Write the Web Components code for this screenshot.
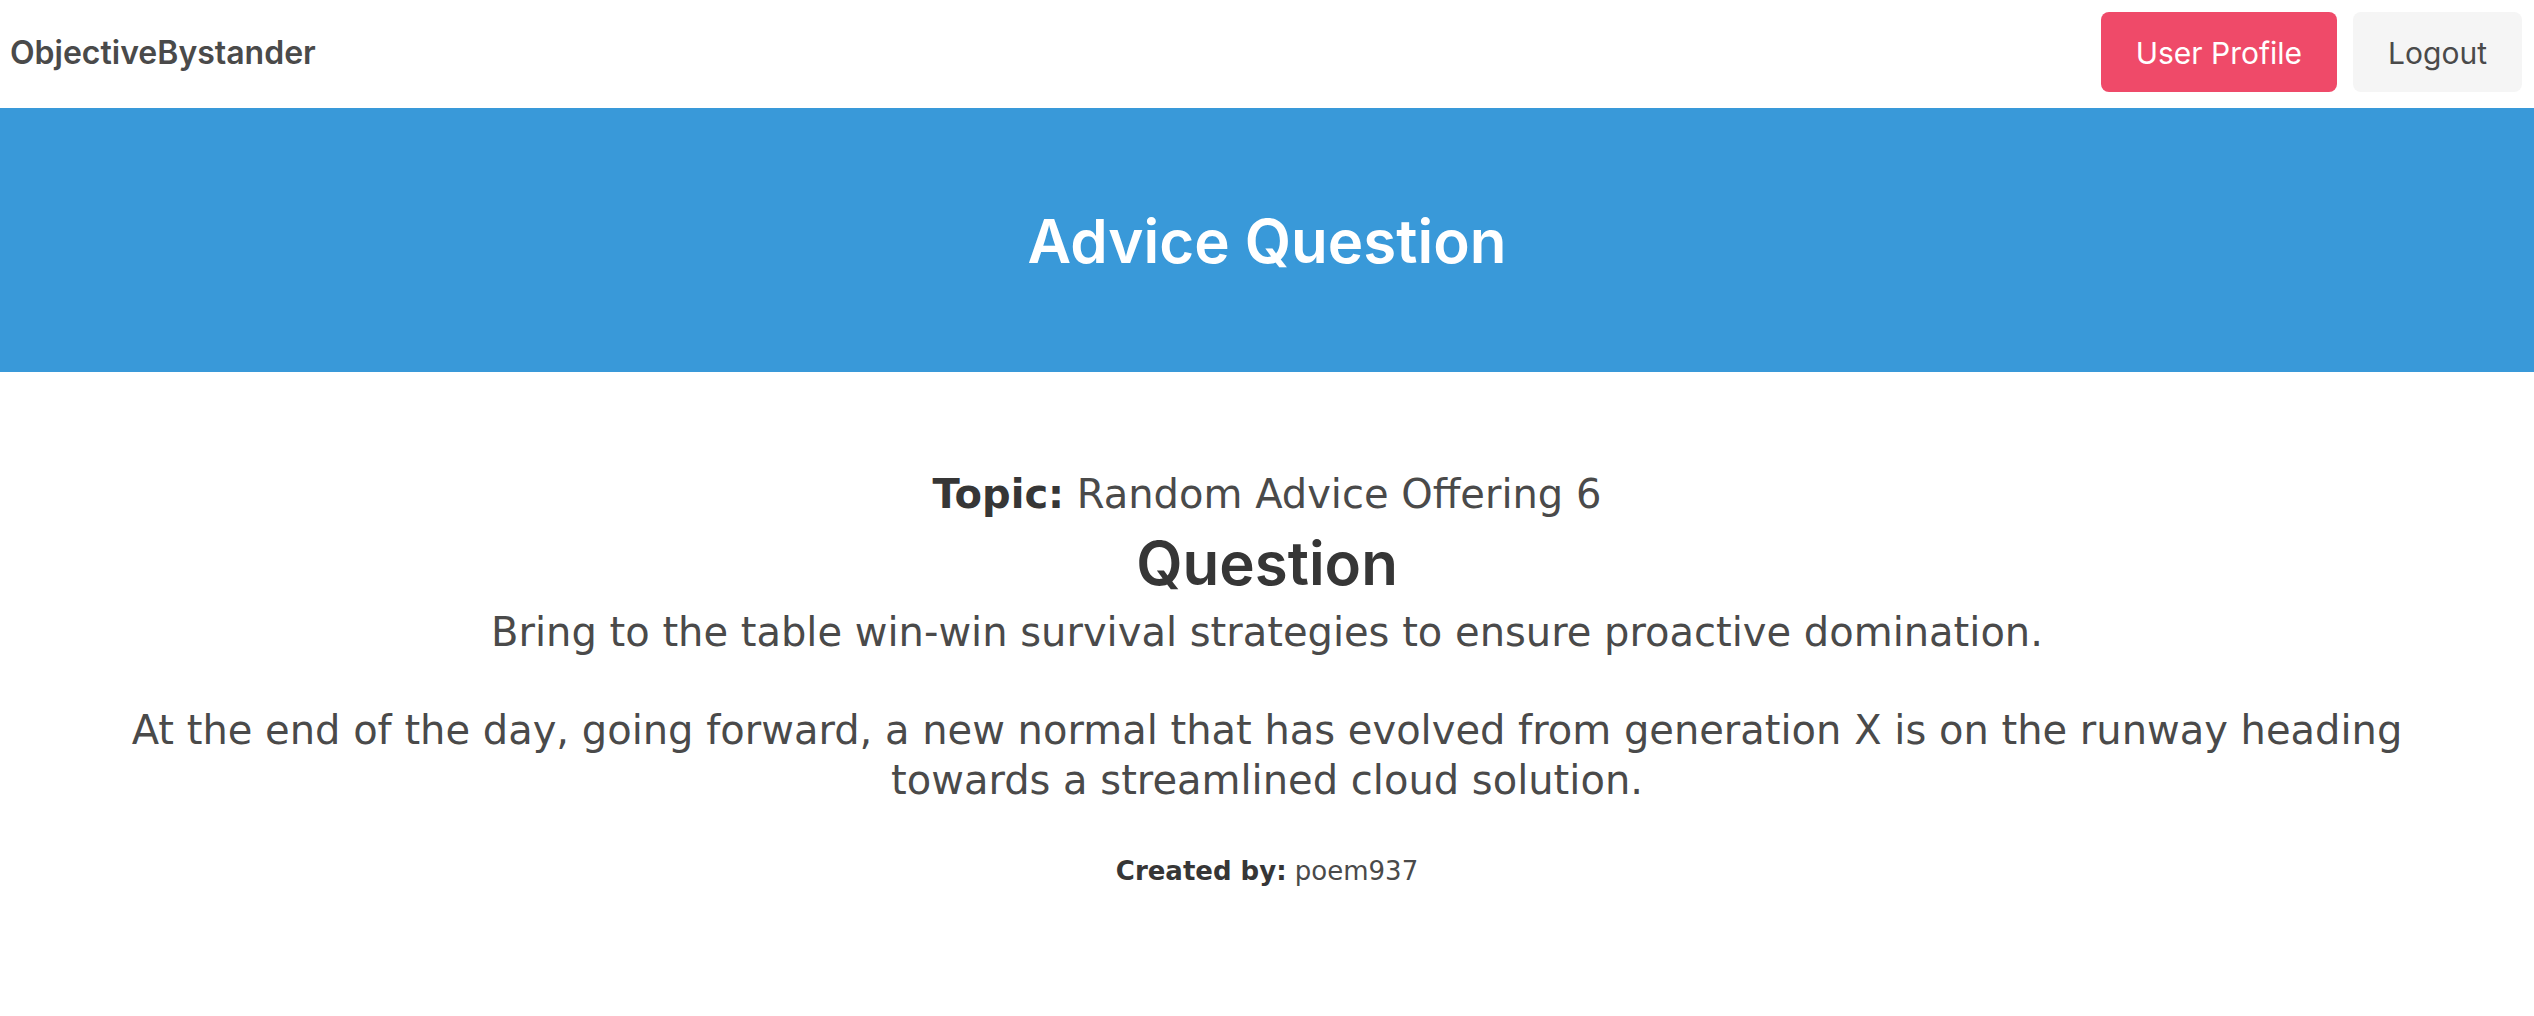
<!DOCTYPE html>
<html lang="en">
<head>
<meta charset="utf-8">
<title>ObjectiveBystander</title>
<style>
body { margin: 0; background: #fff; color: #4a4a4a; font-family: Inter, "Liberation Sans", sans-serif; font-size: 32px; line-height: 48px; }
</style>
</head>
<body>
<site-navbar>
  <a slot="brand" href="#">ObjectiveBystander</a>
  <nav-button variant="danger">User Profile</nav-button>
  <nav-button>Logout</nav-button>
</site-navbar>
<main>
  <page-hero>Advice Question</page-hero>
  <advice-question topic="Random Advice Offering 6" author="poem937">
    <p>Bring to the table win-win survival strategies to ensure proactive domination.</p>
    <p>At the end of the day, going forward, a new normal that has evolved from generation X is on the runway heading towards a streamlined cloud solution.</p>
  </advice-question>
</main>
<script>
class SiteNavbar extends HTMLElement {
  constructor() {
    super();
    this.attachShadow({ mode: "open" }).innerHTML = `
      <style>
        :host { display: block; }
        nav { display: flex; align-items: center; justify-content: space-between; padding: 12px 12px 16px 10px; }
        ::slotted(a) { padding-top: 2px; color: #4a4a4a; font-size: 32px; font-weight: 600; text-decoration: none; }
        .actions { display: flex; gap: 16px; }
      </style>
      <nav aria-label="Main"><slot name="brand"></slot><div class="actions"><slot></slot></div></nav>`;
  }
}
class NavButton extends HTMLElement {
  constructor() {
    super();
    this.attachShadow({ mode: "open" }).innerHTML = `
      <style>
        :host { display: block; }
        button { display: block; height: 80px; margin: 0; padding: 2px 35px 0; border: 0; border-radius: 8px; background: #f5f5f5; color: #4a4a4a; font: inherit; font-size: 30px; cursor: pointer; }
        :host([variant="danger"]) button { background: #ef4a69; color: #fff; }
      </style>
      <button type="button"><slot></slot></button>`;
  }
}
class PageHero extends HTMLElement {
  constructor() {
    super();
    this.attachShadow({ mode: "open" }).innerHTML = `
      <style>
        :host { display: block; padding: 97px 48px 95px; background: #3999d9; text-align: center; }
        h1 { margin: 0; color: #fff; font-size: 60px; line-height: 72px; font-weight: 600; }
      </style>
      <h1><slot></slot></h1>`;
  }
}
class AdviceQuestion extends HTMLElement {
  constructor() {
    super();
    this.attachShadow({ mode: "open" }).innerHTML = `
      <style>
        :host { display: block; padding: 97px 96px 96px; text-align: center; font-family: Verdana, "DejaVu Sans", sans-serif; font-size: 40px; line-height: 50px; }
        strong { color: #363636; font-weight: 700; }
        .topic { margin: 0; }
        h2 { margin: 8px 0; color: #363636; font-family: Inter, "Liberation Sans", sans-serif; font-size: 60px; line-height: 72px; font-weight: 600; }
        ::slotted(p) { margin: 0 0 48px; }
        .author { margin: 0; font-size: 26px; line-height: 36px; }
      </style>
      <p class="topic"><strong>Topic:</strong> <span id="topic"></span></p>
      <h2>Question</h2>
      <slot></slot>
      <p class="author"><strong>Created by:</strong> <span id="author"></span></p>`;
  }
  connectedCallback() {
    this.shadowRoot.getElementById("topic").textContent = this.getAttribute("topic");
    this.shadowRoot.getElementById("author").textContent = this.getAttribute("author");
  }
}
customElements.define("site-navbar", SiteNavbar);
customElements.define("nav-button", NavButton);
customElements.define("page-hero", PageHero);
customElements.define("advice-question", AdviceQuestion);
</script>
</body>
</html>
